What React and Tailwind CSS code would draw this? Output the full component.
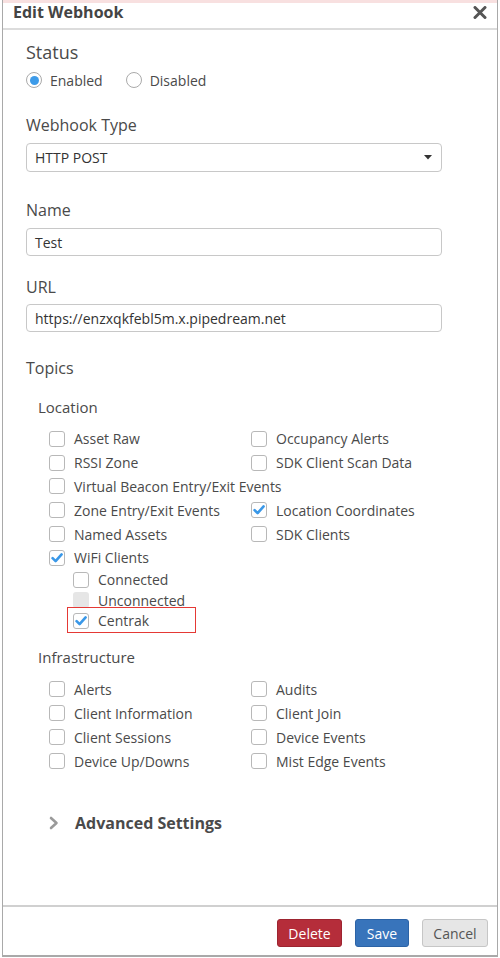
import React from 'react';

function Box({ checked, disabled }) {
    if (disabled) return <span className="w-4 h-4 rounded-[3px] bg-[#e6e6e6] shrink-0" />;
    return (
        <span className="w-4 h-4 rounded-[3px] border border-[#b8b8b8] bg-white shrink-0 flex items-center justify-center">
            {checked && (
                <svg width="12" height="10" viewBox="0 0 12 10">
                    <path d="M1.6 5.2 L4.6 8.2 L10.6 1.4" stroke="#3a98e8" strokeWidth="2.6" fill="none" strokeLinecap="round" strokeLinejoin="round" />
                </svg>
            )}
        </span>
    );
}

function Check({ label, checked, disabled, h = 'h-[23.8px]' }) {
    return (
        <div className={`flex items-center gap-[9px] ${h} whitespace-nowrap`}>
            <Box checked={checked} disabled={disabled} />
            <span>{label}</span>
        </div>
    );
}

function Radio({ label, on }) {
    return (
        <div className="flex items-center gap-[8px]">
            <span className="w-4 h-4 rounded-full border border-[#aaa] bg-white flex items-center justify-center">
                {on && <span className="w-[9px] h-[9px] rounded-full bg-[#3d9be9]" />}
            </span>
            <span>{label}</span>
        </div>
    );
}

const location = [
    ['Asset Raw', 'Occupancy Alerts'],
    ['RSSI Zone', 'SDK Client Scan Data'],
    ['Virtual Beacon Entry/Exit Events', null],
    ['Zone Entry/Exit Events', 'Location Coordinates'],
    ['Named Assets', 'SDK Clients'],
];

const infra = [
    ['Alerts', 'Audits'],
    ['Client Information', 'Client Join'],
    ['Client Sessions', 'Device Events'],
    ['Device Up/Downs', 'Mist Edge Events'],
];

export default function App() {
    return (
        <div className="w-[500px] h-[958px] bg-white font-['Open_Sans','Liberation_Sans',sans-serif] text-[#4a4a4a]">
            <div className="ml-[2px] w-[496px] h-[957px] flex flex-col border-x border-b-2 border-[#a9a9a9]">
                <div className="h-[3px] bg-[#f8e0e0]" />

                {/* Header */}
                <div className="h-[27px] flex items-start justify-between pl-[10px] pr-[10px] border-b-2 border-[#dcdcdc]">
                    <span className="text-[16px] leading-[18px] font-bold text-[#444]">Edit Webhook</span>
                    <svg width="14" height="13" viewBox="0 0 14 13" className="mt-[3px]">
                        <path d="M2 1.5 L12 11.5 M12 1.5 L2 11.5" stroke="#555" strokeWidth="3" strokeLinecap="round" />
                    </svg>
                </div>

                {/* Body */}
                <div className="flex-1 pl-[23px]">
                    <div className="mt-[10px] text-[18px] leading-[24px]">Status</div>
                    <div className="mt-[6px] h-[20px] flex items-center gap-[23px] text-[14px]">
                        <Radio label="Enabled" on />
                        <Radio label="Disabled" />
                    </div>

                    <div className="mt-[24px] text-[16px] leading-[22px]">Webhook Type</div>
                    <div className="mt-[7px] w-[416px] h-[29px] rounded-[4px] border border-[#c8c8c8] flex items-center justify-between pl-[8px] pr-[9px] text-[14px] text-[#333]">
                        <span>HTTP POST</span>
                        <svg width="8" height="5" viewBox="0 0 8 5">
                            <path d="M0 0 H8 L4 4.5 Z" fill="#333" />
                        </svg>
                    </div>

                    <div className="mt-[27px] text-[16px] leading-[22px]">Name</div>
                    <div className="mt-[7px] w-[416px] h-[28px] rounded-[4px] border border-[#c8c8c8] flex items-center pl-[8px] text-[14px] text-[#333]">
                        Test
                    </div>

                    <div className="mt-[20px] text-[16px] leading-[22px]">URL</div>
                    <div className="mt-[6px] w-[416px] h-[28px] rounded-[4px] border border-[#c8c8c8] flex items-center pl-[8px] text-[14px] text-[#333]">
                        https://enzxqkfebl5m.x.pipedream.net
                    </div>

                    <div className="mt-[25px] text-[16px] leading-[22px]">Topics</div>

                    <div className="pl-[12px]">
                        <div className="mt-[18px] text-[15px] leading-[20px]">Location</div>
                        <div className="mt-[10px] pl-[11px] text-[14px]">
                            <div className="grid grid-cols-[202px_1fr]">
                                {location.map(([a, b]) => (
                                    <React.Fragment key={a}>
                                        <Check label={a} />
                                        {b ? <Check label={b} checked={b === 'Location Coordinates'} /> : <div />}
                                    </React.Fragment>
                                ))}
                            </div>
                            <Check label="WiFi Clients" checked />
                            <div className="pl-[24px]">
                                <Check label="Connected" h="h-[20.3px]" />
                                <Check label="Unconnected" disabled h="h-[20.3px]" />
                                <div className="relative">
                                    <Check label="Centrak" checked h="h-[20.3px]" />
                                    <div className="absolute left-[-6px] top-[-3px] w-[129px] h-[26px] border-[1.5px] border-[#e53935]" />
                                </div>
                            </div>
                        </div>

                        <div className="mt-[16.5px] text-[15px] leading-[20px]">Infrastructure</div>
                        <div className="mt-[10px] pl-[11px] text-[14px] grid grid-cols-[202px_1fr]">
                            {infra.map(([a, b]) => (
                                <React.Fragment key={a}>
                                    <Check label={a} h="h-[24px]" />
                                    <Check label={b} h="h-[24px]" />
                                </React.Fragment>
                            ))}
                        </div>

                        <div className="mt-[39px] pl-[11px] flex items-center gap-[16px]">
                            <svg width="10" height="14" viewBox="0 0 10 14">
                                <path d="M2 2 L7.5 7 L2 12" stroke="#9a9a9a" strokeWidth="2.6" fill="none" strokeLinecap="round" strokeLinejoin="round" />
                            </svg>
                            <span className="text-[16px] leading-[22px] font-bold text-[#4a4a4a]">Advanced Settings</span>
                        </div>
                    </div>
                </div>

                {/* Footer */}
                <div className="h-[50px] border-t-2 border-[#d0d0d0] flex items-start justify-end gap-[13px] pt-[12px] pr-[9px] text-[14px]">
                    <button className="w-[65px] h-[28px] rounded-[3px] bg-[#b52d3a] border border-[#9d2430] text-white">Delete</button>
                    <button className="w-[54px] h-[28px] rounded-[3px] bg-[#3874bb] border border-[#2c63a6] text-white">Save</button>
                    <button className="w-[66px] h-[28px] rounded-[3px] bg-[#e6e6e6] border border-[#c6c6c6] text-[#555]">Cancel</button>
                </div>
            </div>
        </div>
    );
}
